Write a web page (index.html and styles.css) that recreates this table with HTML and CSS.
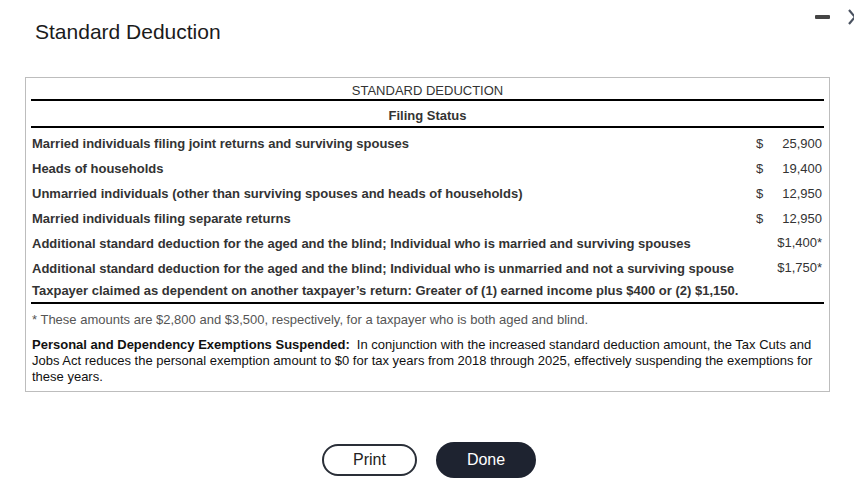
FILE: index.html
```html
<!DOCTYPE html>
<html lang="en">
<head>
<meta charset="utf-8">
<title>Standard Deduction</title>
<link rel="stylesheet" href="styles.css">
</head>
<body>
<div class="dialog">
  <header class="dialog-head">
    <h1 class="dialog-title">Standard Deduction</h1>
    <div class="win-controls">
      <span class="minimize"></span>
      <svg class="close" width="10" height="18" viewBox="0 0 10 18"><path d="M2 2 L8 9 L2 16" fill="none" stroke="#4a5260" stroke-width="2.2"/></svg>
    </div>
  </header>
  <section class="panel">
    <table class="ded-table">
      <thead>
        <tr class="cap-row"><th colspan="3">STANDARD DEDUCTION</th></tr>
        <tr class="fs-row"><th colspan="3">Filing Status</th></tr>
      </thead>
      <tbody>
        <tr><td class="lbl">Married individuals filing joint returns and surviving spouses</td><td class="cur">$</td><td class="amt">25,900</td></tr>
        <tr><td class="lbl">Heads of households</td><td class="cur">$</td><td class="amt">19,400</td></tr>
        <tr><td class="lbl">Unmarried individuals (other than surviving spouses and heads of households)</td><td class="cur">$</td><td class="amt">12,950</td></tr>
        <tr><td class="lbl">Married individuals filing separate returns</td><td class="cur">$</td><td class="amt">12,950</td></tr>
        <tr><td class="lbl">Additional standard deduction for the aged and the blind; Individual who is married and surviving spouses</td><td class="cur"></td><td class="amt star">$1,400*</td></tr>
        <tr><td class="lbl">Additional standard deduction for the aged and the blind; Individual who is unmarried and not a surviving spouse</td><td class="cur"></td><td class="amt star">$1,750*</td></tr>
        <tr class="last"><td class="lbl" colspan="3">Taxpayer claimed as dependent on another taxpayer’s return: Greater of (1) earned income plus $400 or (2) $1,150.</td></tr>
      </tbody>
    </table>
    <p class="footnote">* These amounts are $2,800 and $3,500, respectively, for a taxpayer who is both aged and blind.</p>
    <p class="note"><strong>Personal and Dependency Exemptions Suspended:</strong><span class="note-body">In conjunction with the increased standard deduction amount, the Tax Cuts and Jobs Act reduces the personal exemption amount to $0 for tax years from 2018 through 2025, effectively suspending the exemptions for these years.</span></p>
  </section>
  <footer class="actions">
    <button class="btn btn-outline">Print</button>
    <button class="btn btn-solid">Done</button>
  </footer>
</div>
</body>
</html>
```
FILE: styles.css
```css
* { box-sizing: border-box; }
html, body { margin: 0; padding: 0; background: #fff; }
body {
  font-family: "Liberation Sans", Arial, sans-serif;
  color: #222;
  width: 854px;
  height: 503px;
  overflow: hidden;
}
.dialog { padding: 0 0 0 25px; }
.dialog-head {
  display: flex;
  align-items: flex-start;
  justify-content: space-between;
  height: 77px;
}
.dialog-title {
  margin: 20px 0 0 10px;
  font-size: 21px;
  font-weight: normal;
  line-height: 24px;
  color: #1b1b1b;
}
.win-controls {
  display: flex;
  align-items: flex-start;
  gap: 17px;
  margin-top: 8px;
  margin-right: -3px;
}
.minimize {
  display: block;
  width: 15px;
  height: 4px;
  margin-top: 7px;
  background: #454545;
  border-radius: 1px;
}
.close { display: block; }
.panel {
  width: 805px;
  height: 315px;
  border: 1px solid #bdbdbd;
  padding: 0 5px 0 5px;
}
.ded-table {
  width: 793px;
  border-collapse: collapse;
  font-size: 13px;
  color: #333;
}
.ded-table th { padding: 0; text-align: center; }
.cap-row th {
  font-weight: normal;
  font-size: 13px;
  height: 22px;
  padding-top: 4px;
  line-height: 15px;
  color: #333;
  border-bottom: 2px solid #000;
}
.fs-row th {
  font-weight: bold;
  font-size: 13px;
  height: 27px;
  padding-top: 3px;
  line-height: 15px;
  border-bottom: 2px solid #000;
}
.ded-table td {
  height: 25px;
  padding: 7px 0 3px 0;
  line-height: 15px;
  vertical-align: top;
}
.ded-table tbody tr:first-child td { height: 27px; padding-top: 8px; }
.lbl { font-weight: bold; padding-left: 1px !important; white-space: nowrap; }
.cur { width: 10px; text-align: left; padding-left: 0; }
.amt { width: 58px; text-align: right; padding-right: 2px !important; }
.star { font-size: 13px; padding-top: 6px !important; }
.ded-table tr.last td { border-bottom: 2px solid #000; height: 24px; padding-top: 4px; }
.footnote {
  margin: 0;
  padding: 8px 0 0 1px;
  font-size: 13px;
  line-height: 15px;
  color: #555;
}
.note {
  margin: 0;
  padding: 10px 0 0 1px;
  font-size: 13px;
  line-height: 16px;
  color: #111;
}
.note strong { font-weight: bold; margin-right: 7px; }
.actions {
  display: flex;
  gap: 19px;
  margin-left: 297px;
  margin-top: 50px;
  align-items: center;
}
.btn {
  font-family: "Liberation Sans", Arial, sans-serif;
  font-size: 16px;
  border-radius: 18px;
  cursor: pointer;
}
.btn-outline {
  width: 95px;
  height: 32px;
  background: #fff;
  border: 2px solid #2a2f38;
  color: #222;
}
.btn-solid {
  width: 100px;
  height: 36px;
  background: #1e2330;
  border: none;
  color: #fff;
}
```
